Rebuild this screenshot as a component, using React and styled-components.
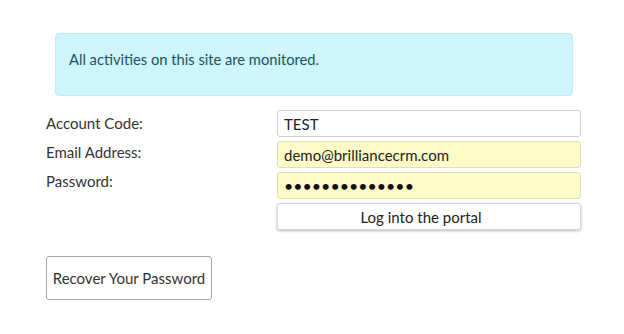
import React from 'react'
import styled, { createGlobalStyle } from 'styled-components'

const GlobalStyle = createGlobalStyle`
  body {
    margin: 0;
    background: #fff;
    font-family: Lato, 'Liberation Sans', sans-serif;
    color: #222;
  }
`

const Page = styled.div`
  padding: 33px 0 0 46px;
  width: 624px;
  height: 334px;
  box-sizing: border-box;
`

const Alert = styled.div`
  margin-left: 9px;
  width: 518px;
  height: 63px;
  box-sizing: border-box;
  padding: 15px 14px 0 13px;
  background: #cff4fc;
  border: 1px solid #b6effb;
  border-radius: 4px;
  color: #17545f;
  font-size: 14.7px;
  line-height: 20px;
`

const Form = styled.form`
  display: flex;
  margin-top: 13px;
`

const Labels = styled.div`
  display: flex;
  flex-direction: column;
  width: 231px;
`

const Label = styled.label`
  font-size: 15px;
  line-height: 29px;
  height: 29px;
  color: #333;
`

const Fields = styled.div`
  display: flex;
  flex-direction: column;
  gap: 4px;
  width: 304px;
  margin-top: 1px;
`

const Field = styled.input`
  height: 27px;
  box-sizing: border-box;
  margin: 0;
  padding: 0 6px;
  border: 1px solid ${p => (p.$filled ? '#e2dfb2' : '#cfcfcf')};
  border-radius: 3px;
  background: ${p => (p.$filled ? '#fefbc8' : '#fff')};
  font-family: Lato, 'Liberation Sans', sans-serif;
  font-size: 15px;
  color: #222;
  outline: none;
`

const Secret = styled(Field)`
  font-size: 16px;
  letter-spacing: 0;
  color: #111;
`

const Submit = styled.button`
  height: 27px;
  margin: 0;
  padding: 0 16px 0 0;
  border: 1px solid #d8d8d8;
  border-radius: 3px;
  background: #fff;
  box-shadow: 0 1px 3px rgba(0, 0, 0, 0.28);
  font-family: Lato, 'Liberation Sans', sans-serif;
  font-size: 15px;
  color: #222;
`

const Recover = styled.button`
  display: block;
  margin-top: 26px;
  width: 166px;
  height: 44px;
  padding: 0;
  border: 1px solid #a9a9a9;
  border-radius: 3px;
  background: #fff;
  font-family: Lato, 'Liberation Sans', sans-serif;
  font-size: 15px;
  color: #333;
`

export default function App () {
  return (
    <Page>
      <GlobalStyle />
      <Alert>All activities on this site are monitored.</Alert>
      <Form onSubmit={e => e.preventDefault()}>
        <Labels>
          <Label>Account Code:</Label>
          <Label>Email Address:</Label>
          <Label>Password:</Label>
        </Labels>
        <Fields>
          <Field type='text' defaultValue='TEST' readOnly />
          <Field $filled type='text' defaultValue='demo@brilliancecrm.com' readOnly />
          <Secret $filled type='password' defaultValue='brilliance1234' readOnly />
          <Submit type='submit'>Log into the portal</Submit>
        </Fields>
      </Form>
      <Recover type='button'>Recover Your Password</Recover>
    </Page>
  )
}
